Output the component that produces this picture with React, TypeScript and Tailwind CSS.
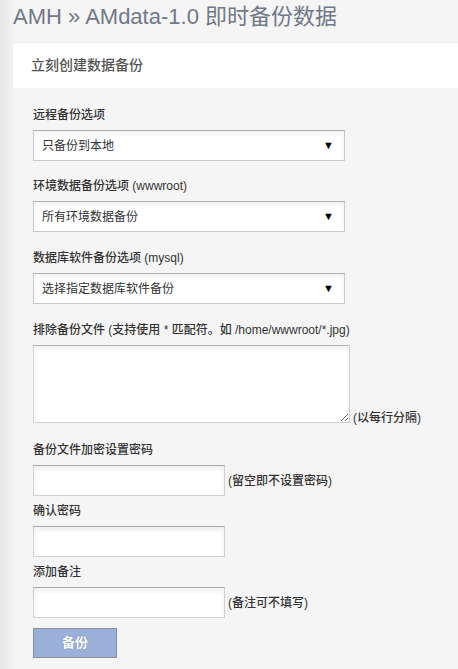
import React from "react";

const font = { fontFamily: '"Liberation Sans", "Noto Sans CJK SC", Arial, sans-serif' };

function Label({ children, className = "" }: { children: React.ReactNode; className?: string }) {
  return <div className={`h-4 text-[12px] font-medium leading-4 text-[#333] ${className}`}>{children}</div>;
}

function Select({ text }: { text: string }) {
  return (
    <div className="mt-[7px] flex h-[31px] w-[312px] items-center justify-between border border-[#c9c9c9] border-t-[#b0b0b0] bg-white pl-[8px] pr-[10px] shadow-[inset_0_3px_5px_rgba(0,0,0,0.06)]">
      <span className="text-[12px] text-[#333]">{text}</span>
      <span className="text-[11px] leading-none text-black">▼</span>
    </div>
  );
}

function Input({ hint }: { hint?: string }) {
  return (
    <div className="mt-[7px] flex items-center">
      <div className="h-[31px] w-[192px] border border-[#d0d0d0] border-t-[#a8a8a8] bg-white shadow-[inset_0_3px_5px_rgba(0,0,0,0.07)]" />
      {hint && <span className="ml-[3px] text-[12px] font-medium text-[#333]">{hint}</span>}
    </div>
  );
}

export default function App() {
  return (
    <div className="flex h-[669px] w-[458px] overflow-hidden" style={font}>
      <div className="h-full w-[13px] shrink-0 bg-gradient-to-r from-[#e6e6e6] to-[#f2f2f2]" />
      <div className="flex-1 bg-[#f5f5f5]">
        <div className="flex h-[42px] items-start pt-[4px] text-[22px] leading-[26px] text-[#717888]">
          AMH » AMdata-1.0 即时备份数据
        </div>
        <div className="flex h-[46px] items-center border-t border-[#ececec] bg-white pl-[18px] text-[14px] font-medium text-[#555]">
          立刻创建数据备份
        </div>
        <div className="pl-[20px]">
          <Label className="mt-[19px]">远程备份选项</Label>
          <Select text="只备份到本地" />
          <Label className="mt-[17px]">环境数据备份选项 (wwwroot)</Label>
          <Select text="所有环境数据备份" />
          <Label className="mt-[18px]">数据库软件备份选项 (mysql)</Label>
          <Select text="选择指定数据库软件备份" />
          <Label className="mt-[18px]">排除备份文件 (支持使用 * 匹配符。如 /home/wwwroot/*.jpg)</Label>
          <div className="mt-[7px] flex items-end">
            <textarea
              className="block h-[78px] w-[317px] border border-[#cfcfcf] border-t-[#b5b5b5] bg-white shadow-[inset_0_3px_5px_rgba(0,0,0,0.06)] outline-none"
              readOnly
            />
            <span className="mb-[-3px] ml-[3px] text-[12px] font-medium leading-4 text-[#333]">(以每行分隔)</span>
          </div>
          <Label className="mt-[19px]">备份文件加密设置密码</Label>
          <Input hint="(留空即不设置密码)" />
          <Label className="mt-[7px]">确认密码</Label>
          <Input />
          <Label className="mt-[7px]">添加备注</Label>
          <Input hint="(备注可不填写)" />
          <button className="mt-[10px] flex h-[30px] w-[84px] items-center justify-center border border-[#8a8f99] bg-[#9bb0d9] text-[13px] font-bold text-white [text-shadow:0_0_1px_rgba(0,0,0,0.3)]">
            备份
          </button>
        </div>
      </div>
    </div>
  );
}
